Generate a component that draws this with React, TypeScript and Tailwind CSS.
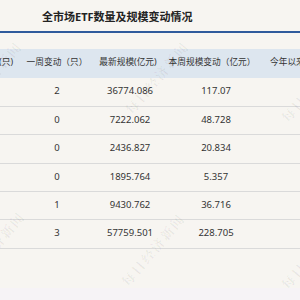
import React from "react";

const rows = [
  { week: "2", latest: "36774.086", change: "117.07", h: "h-[29px]" },
  { week: "0", latest: "7222.062", change: "48.728", h: "h-[28px]" },
  { week: "0", latest: "2436.827", change: "20.834", h: "h-[29px]" },
  { week: "0", latest: "1895.764", change: "5.357", h: "h-[28px]" },
  { week: "1", latest: "9430.762", change: "36.716", h: "h-[28px]" },
  { week: "3", latest: "57759.501", change: "228.705", h: "h-[29px]" },
];

const marks = [
  "left-[-55px] top-[68px]",
  "left-[112px] top-[68px]",
  "left-[268px] top-[76px]",
  "left-[-52px] top-[238px]",
  "left-[108px] top-[240px]",
  "left-[268px] top-[243px]",
];

const App = () => {
  return (
    <div className="relative w-[300px] h-[300px] overflow-hidden bg-[#f7f5f1] text-[#333] font-['Noto_Sans','Noto_Sans_CJK_SC',sans-serif]">
      <div className="h-[31px] flex items-center pl-[42px] pt-[4px] text-[11px] font-bold text-[#222] whitespace-nowrap">
        全市场ETF数量及规模变动情况
      </div>
      <div className="h-[1.5px] bg-[#2f5b9c]" />
      <div className="h-[16px]" />

      <div className="flex h-[29px] items-center bg-[#dde6ef] text-[8.7px] whitespace-nowrap">
        <div className="w-[22px] shrink-0 overflow-hidden flex justify-end pr-[9px]">
          <span className="shrink-0">ETF数量(只)</span>
        </div>
        <div className="w-[70px] shrink-0 text-center">一周变动（只）</div>
        <div className="w-[72px] shrink-0 text-center">最新规模(亿元)</div>
        <div className="w-[96px] shrink-0 text-center">本周规模变动（亿元）</div>
        <div className="shrink-0 pl-[10px]">今年以来规模变动（亿元）</div>
      </div>

      {rows.map((r, i) => (
        <div
          key={i}
          className={`flex items-center ${r.h} border-b border-[#dadada] text-[9.5px] whitespace-nowrap`}
        >
          <div className="w-[22px] shrink-0" />
          <div className="w-[70px] shrink-0 text-center">{r.week}</div>
          <div className="w-[76px] shrink-0 text-center">{r.latest}</div>
          <div className="w-[96px] shrink-0 text-center">{r.change}</div>
        </div>
      ))}

      <div className="absolute left-0 right-0 bottom-0 h-[12px] bg-[#f6f3f6]" />

      {marks.map((m, i) => (
        <span
          key={i}
          className={`absolute ${m} -rotate-[50deg] text-[13px] font-bold tracking-[2px] text-black/[0.06] whitespace-nowrap pointer-events-none font-['Noto_Serif_CJK_SC','Noto_Sans_CJK_SC',serif]`}
        >
          每日经济新闻
        </span>
      ))}
    </div>
  );
};

export default App;
